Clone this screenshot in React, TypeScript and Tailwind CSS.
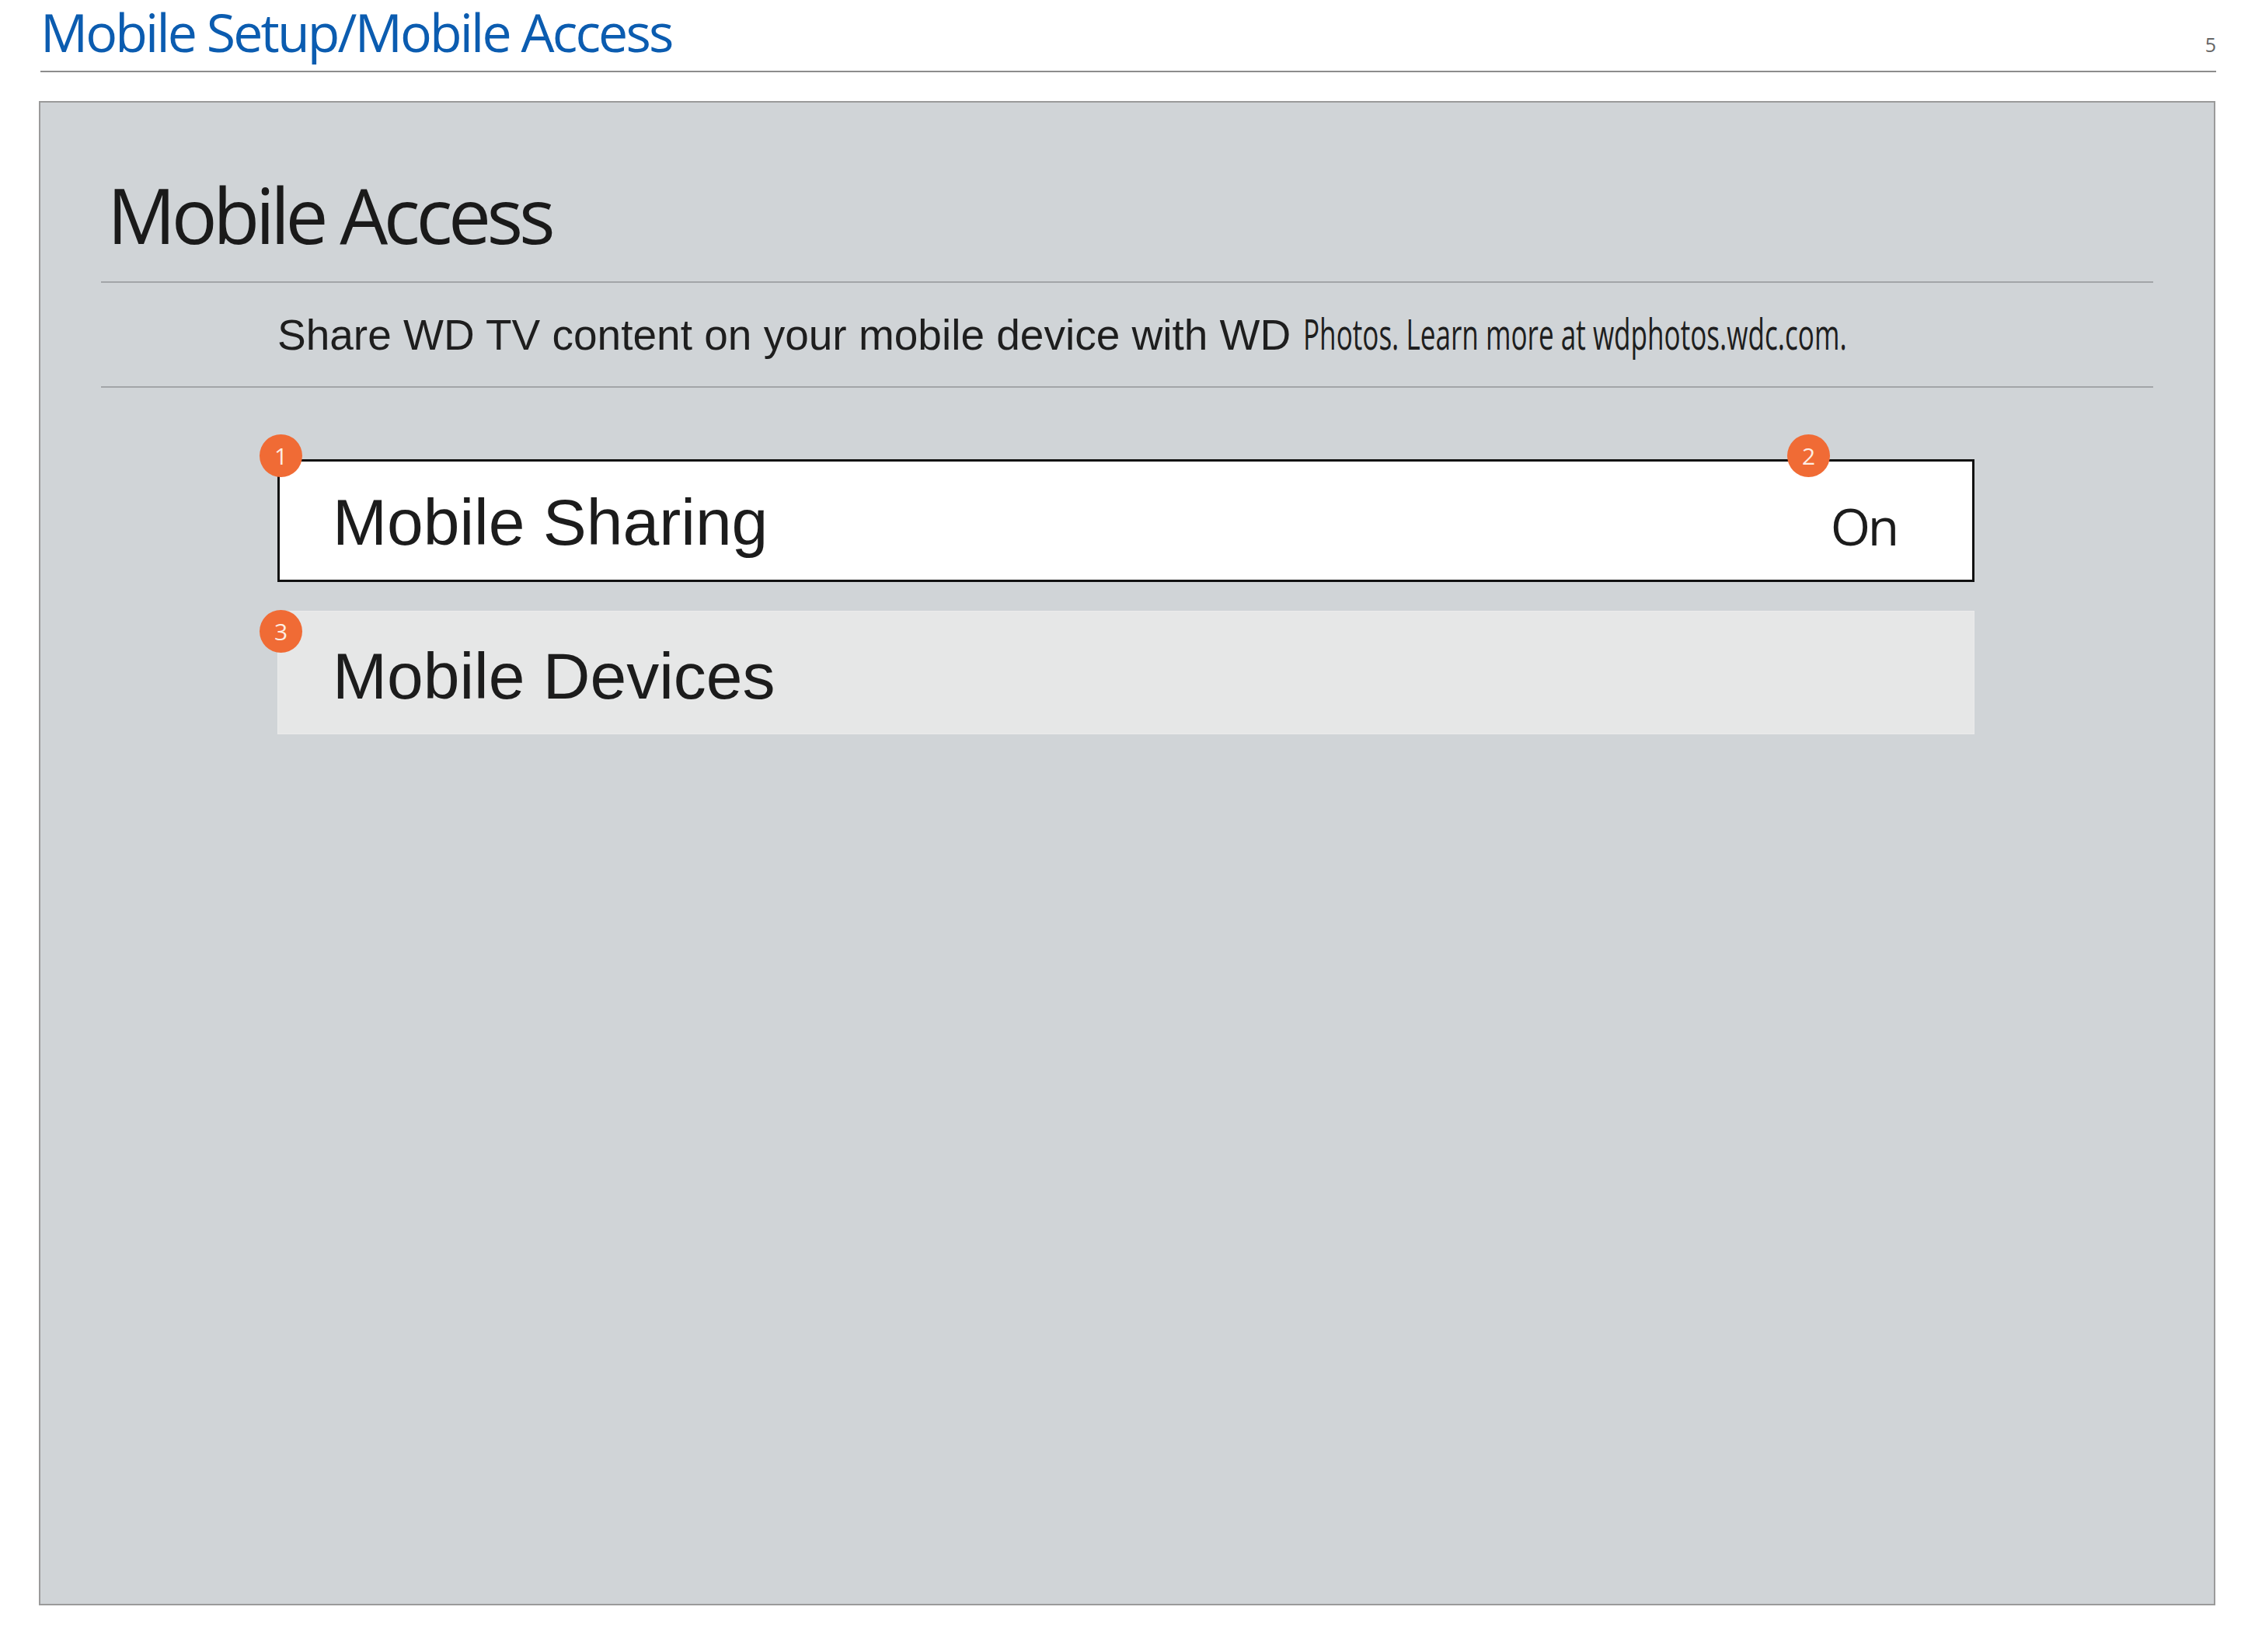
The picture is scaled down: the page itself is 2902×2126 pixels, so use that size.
const badge =
  "absolute w-[55px] h-[55px] rounded-full bg-[#f06b35] flex items-center justify-center text-[30px] leading-none text-[#fdeee4] font-['Open_Sans',sans-serif]";

function Badge({ n, className }: { n: string; className: string }) {
  return <div className={`${badge} ${className}`}>{n}</div>;
}

export default function App() {
  return (
    <div className="w-[2902px] h-[2126px] bg-white font-['Open_Sans',sans-serif]">
      {/* page header */}
      <header className="flex items-baseline justify-between pl-[52px] pr-[50px] pt-[7px]">
        <h1 className="text-[68px] leading-none tracking-[-0.042em] text-[#0b5cb0]">
          Mobile Setup/Mobile Access
        </h1>
        <span className="text-[25px] leading-none text-[#666]">5</span>
      </header>
      <div className="ml-[52px] mt-[16px] h-[2px] w-[2800px] bg-[#8c8c8c]" />

      {/* screen capture */}
      <section className="ml-[50px] mt-[37px] h-[1936px] w-[2801px] border-2 border-[#9a9a9a] bg-[#d0d4d7] px-[78px]">
        <h2 className="pt-[95px] pl-[8px] text-[98px] leading-none tracking-[-0.055em] text-[#1a1a1a]">
          Mobile Access
        </h2>
        <div className="mt-[37px] h-[2px] bg-[#a2a5a8]" />

        <p className="mt-[38px] pl-[227px] font-['Liberation_Sans',Arial,sans-serif] text-[55px] leading-none text-[#1e1e1e] whitespace-nowrap">
          Share WD TV content on your mobile device with WD{" "}
          <span className="inline-block origin-left scale-x-[0.65] font-['Open_Sans',sans-serif] text-[54px]">
            Photos. Learn more at wdphotos.wdc.com.
          </span>
        </p>
        <div className="mt-[38px] h-[2px] bg-[#a2a5a8]" />

        <div className="pl-[227px] font-['Liberation_Sans',Arial,sans-serif] text-[84px] leading-none text-[#1c1c1c]">
          <div className="relative mt-[92px] flex h-[158px] w-[2184px] items-center justify-between border-[3px] border-[#111] bg-white pl-[68px] pr-[97px]">
            <Badge n="1" className="-left-[26px] -top-[35px]" />
            <Badge n="2" className="left-[1940px] -top-[35px]" />
            <span className="mt-[4px]">Mobile Sharing</span>
            <span className="mt-[12px] font-['Open_Sans',sans-serif] text-[66px] tracking-[-0.05em]">On</span>
          </div>

          <div className="relative mt-[37px] flex h-[159px] w-[2184px] items-center border border-[#ebebeb] bg-[#e6e7e7] pl-[70px]">
            <Badge n="3" className="-left-[24px] -top-[2px]" />
            <span className="mt-[9px]">Mobile Devices</span>
          </div>
        </div>
      </section>
    </div>
  );
}
